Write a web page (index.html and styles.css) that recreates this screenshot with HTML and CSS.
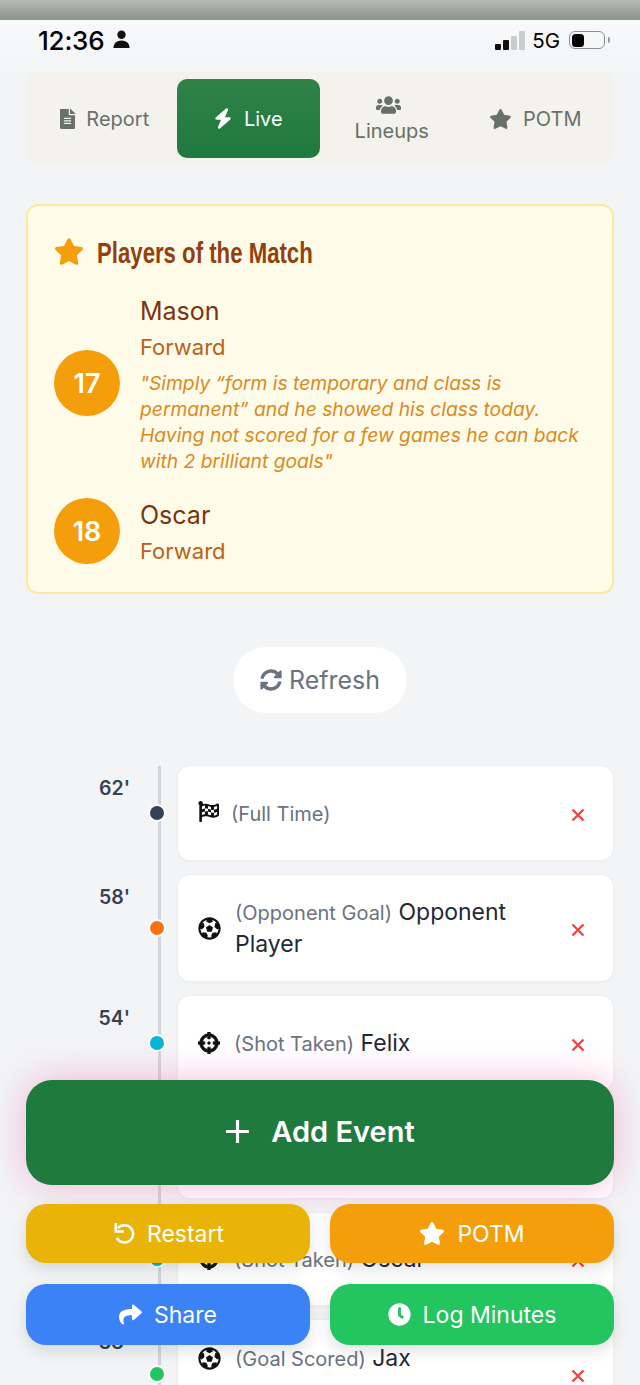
FILE: index.html
```html
<!DOCTYPE html>
<html lang="en">
<head>
<meta charset="utf-8">
<title>Match Live</title>
<link rel="stylesheet" href="styles.css">
</head>
<body>
<div class="page">
  <div class="topstrip"></div>
  <div class="statusbar">
    <div class="status-left">
      <span class="clock">12:36</span>
      <svg class="person" viewBox="0 0 20 20"><circle cx="10" cy="5" r="4.4"/><path d="M1.5 19c0-5 3.5-8 8.5-8s8.5 3 8.5 8z"/></svg>
    </div>
    <div class="status-right">
      <div class="signal"><i class="b1"></i><i class="b2"></i><i class="b3"></i><i class="b4"></i></div>
      <span class="net">5G</span>
      <div class="battery"><div class="battery-fill"></div></div>
      <div class="battery-cap"></div>
    </div>
  </div>

  <main class="main">
    <nav class="tabs">
      <div class="tab">
        <svg class="tab-ico doc" viewBox="0 0 384 512"><path d="M224 136V0H24C10.7 0 0 10.7 0 24v464c0 13.3 10.7 24 24 24h336c13.3 0 24-10.7 24-24V160H248c-13.2 0-24-10.8-24-24zm64 236c0 6.6-5.4 12-12 12H108c-6.6 0-12-5.4-12-12v-8c0-6.6 5.4-12 12-12h168c6.6 0 12 5.4 12 12v8zm0-64c0 6.6-5.4 12-12 12H108c-6.6 0-12-5.4-12-12v-8c0-6.6 5.4-12 12-12h168c6.6 0 12 5.4 12 12v8zm0-72v8c0 6.6-5.4 12-12 12H108c-6.6 0-12-5.4-12-12v-8c0-6.6 5.4-12 12-12h168c6.6 0 12 5.4 12 12zm96-114.1v6.1H256V0h6.1c6.4 0 12.5 2.5 17 7l97.9 98c4.5 4.5 7 10.6 7 16.9z"/></svg>
        <span>Report</span>
      </div>
      <div class="tab tab-active">
        <svg class="tab-ico bolt" viewBox="0 0 448 512"><path d="M349.4 44.6c5.9-13.7 1.5-29.7-10.6-38.5s-28.6-8-39.9 1.8l-256 224c-10 8.8-13.6 22.9-8.9 35.3S50.7 288 64 288H175.5L98.6 467.4c-5.9 13.7-1.5 29.7 10.6 38.5s28.6 8 39.9-1.8l256-224c10-8.8 13.6-22.9 8.9-35.3s-16.6-20.7-30-20.7H272.5L349.4 44.6z"/></svg>
        <span>Live</span>
      </div>
      <div class="tab tab-stack">
        <svg class="tab-ico users" viewBox="0 0 640 512"><path d="M96 224c35.3 0 64-28.7 64-64s-28.7-64-64-64-64 28.7-64 64 28.7 64 64 64zm448 0c35.3 0 64-28.7 64-64s-28.7-64-64-64-64 28.7-64 64 28.7 64 64 64zm32 32h-64c-17.6 0-33.5 7.1-45.1 18.6 40.3 22.1 68.9 62 75.1 109.4h66c17.7 0 32-14.3 32-32v-32c0-35.3-28.7-64-64-64zm-256 0c61.9 0 112-50.1 112-112S381.9 32 320 32 208 82.1 208 144s50.1 112 112 112zm76.8 32h-8.3c-20.8 10-43.9 16-68.5 16s-47.6-6-68.5-16h-8.3C179.6 288 128 339.6 128 403.2V432c0 26.5 21.5 48 48 48h288c26.5 0 48-21.5 48-48v-28.8c0-63.6-51.6-115.2-115.2-115.2zm-223.7-13.4C161.5 263.1 145.6 256 128 256H64c-35.3 0-64 28.7-64 64v32c0 17.7 14.3 32 32 32h65.9c6.3-47.4 34.9-87.3 75.2-109.4z"/></svg>
        <span>Lineups</span>
      </div>
      <div class="tab">
        <svg class="tab-ico star" viewBox="0 0 576 512"><path d="M259.3 17.8L194 150.2 47.9 171.5c-26.2 3.8-36.7 36.1-17.7 54.6l105.7 103-25 145.5c-4.5 26.3 23.2 46 46.4 33.7L288 439.6l130.7 68.7c23.2 12.2 50.9-7.4 46.4-33.7l-25-145.5 105.7-103c19-18.5 8.5-50.8-17.7-54.6L382 150.2 316.7 17.8c-11.7-23.6-45.6-23.9-57.4 0z"/></svg>
        <span>POTM</span>
      </div>
    </nav>

    <section class="potm-card">
      <h2 class="potm-title">
        <svg class="potm-star" viewBox="0 0 576 512"><path d="M259.3 17.8L194 150.2 47.9 171.5c-26.2 3.8-36.7 36.1-17.7 54.6l105.7 103-25 145.5c-4.5 26.3 23.2 46 46.4 33.7L288 439.6l130.7 68.7c23.2 12.2 50.9-7.4 46.4-33.7l-25-145.5 105.7-103c19-18.5 8.5-50.8-17.7-54.6L382 150.2 316.7 17.8c-11.7-23.6-45.6-23.9-57.4 0z"/></svg>
        <span class="potm-title-text">Players of the Match</span>
      </h2>
      <div class="potm-row">
        <div class="shirt shirt-first">17</div>
        <div class="potm-info">
          <div class="potm-name">Mason</div>
          <div class="potm-pos">Forward</div>
          <p class="potm-quote">"Simply “form is temporary and class is permanent” and he showed his class today. Having not scored for a few games he can back with 2 brilliant goals"</p>
        </div>
      </div>
      <div class="potm-row potm-row-second">
        <div class="shirt">18</div>
        <div class="potm-info">
          <div class="potm-name">Oscar</div>
          <div class="potm-pos">Forward</div>
        </div>
      </div>
    </section>

    <div class="refresh-wrap">
      <div class="refresh">
        <svg class="refresh-ico" viewBox="0 0 512 512"><path d="M370.72 133.28C339.458 104.008 298.888 87.962 255.848 88c-77.458.068-144.328 53.178-162.791 126.85-1.344 5.363-6.122 9.15-11.651 9.15H24.103c-7.498 0-13.194-6.807-11.807-14.176C33.933 94.924 134.813 8 256 8c66.448 0 126.791 26.136 171.315 68.685L463.03 40.97C478.149 25.851 504 36.559 504 57.941V192c0 13.255-10.745 24-24 24H345.941c-21.382 0-32.09-25.851-16.971-40.971l41.75-41.749zM32 296h134.059c21.382 0 32.09 25.851 16.971 40.971l-41.75 41.75c31.262 29.273 71.835 45.319 114.876 45.28 77.418-.07 144.315-53.144 162.787-126.849 1.344-5.363 6.122-9.15 11.651-9.15h57.304c7.498 0 13.194 6.807 11.807 14.176C478.067 417.076 377.187 504 256 504c-66.448 0-126.791-26.136-171.315-68.685L48.97 471.03C33.851 486.149 8 475.441 8 454.059V320c0-13.255 10.745-24 24-24z"/></svg>
        <span>Refresh</span>
      </div>
    </div>

    <section class="timeline">
      <div class="rail"></div>

      <article class="event">
        <div class="minute">62'</div>
        <span class="dot dot-dark"></span>
        <div class="event-card h94">
          <svg class="ev-ico flag" viewBox="0 0 512 512"><path d="M243.2 189.9V258c26.1 5.9 49.3 15.6 73.6 22.3v-68.2c-26-5.8-49.4-15.5-73.6-22.2zm223.3-123c-34.3 15.9-76.5 31.9-117 31.9C296 98.8 251.7 64 184.3 64c-25 0-47.3 4.4-68 12 2.8-7.3 4.1-15.2 3.6-23.6C118.1 24 94.8.8 66.4 0 34.3-.9 8 24.9 8 56.8c0 19.2 9.5 36.1 24 46.3V488c0 13.3 10.7 24 24 24h16c13.3 0 24-10.7 24-24v-94.4c28.3-12.1 63.6-22.1 114.4-22.1 53.6 0 97.8 34.8 165.2 34.8 48.2 0 86.7-16.3 122.5-40.9 8.7-6 13.8-15.8 13.8-26.4V95.9c.1-23.3-24.2-38.8-45.4-29zM169.6 325.5c-25.8 2.7-50 8.7-73.6 16.3v-70.5c26.2-9.1 46.7-14.2 73.6-17.2v71.4zM464 191c-23.6 9.8-46.3 19.5-73.6 23.9V286c24.8-3.4 51.4-11.8 73.6-26v70.5c-25.1 16.1-48.5 24.7-73.6 27.1V286c-27 3.7-47.9 1.5-73.6-5.6v67.4c-23.9-7.4-47.3-16.7-73.6-21.3V258c-19.7-4.4-40.8-6.8-73.6-3.8v-70c-22.4 3.1-44.6 10.2-73.6 20.9v-70.5c33.2-12.2 50.1-19.8 73.6-22v71.6c27-3.7 48.4-1.3 73.6 5.7v-67.4c23.7 7.4 47.2 16.7 73.6 21.3v68.4c23.7 5.3 47.6 6.9 73.6 2.7V143c27-4.8 52.3-13.6 73.6-22.5V191z"/></svg>
          <div class="ev-text"><span class="ev-type">(Full Time)</span></div>
          <svg class="ev-x" viewBox="0 0 14 14"><path d="M1.5 1.5l11 11M12.5 1.5l-11 11"/></svg>
        </div>
      </article>

      <article class="event">
        <div class="minute">58'</div>
        <span class="dot dot-orange"></span>
        <div class="event-card h106">
          <svg class="ev-ico" viewBox="0 0 512 512"><path d="M504 256c0 136.967-111.033 248-248 248S8 392.967 8 256 119.033 8 256 8s248 111.033 248 248zm-48 0l-.003-.282-26.064 22.741-62.679-58.5 16.454-84.355 34.303 3.072c-24.889-34.216-60.004-60.089-100.709-73.141l13.651 31.939L256 139l-74.953-41.525 13.651-31.939c-40.631 13.028-75.78 38.87-100.709 73.141l34.565-3.073 16.192 84.355-62.678 58.5-26.064-22.741-.003.282c0 43.015 13.497 83.952 38.472 117.991l7.704-33.897 85.138 10.447 36.301 77.826-29.902 17.786c40.202 13.122 84.29 13.148 124.572 0l-29.902-17.786 36.301-77.826 85.138-10.447 7.704 33.897C442.503 339.952 456 299.015 456 256zm-248.102 69.571l-29.894-91.312L256 177.732l77.996 56.527-29.622 91.312h-96.476z"/></svg>
          <div class="ev-text"><span class="ev-type">(Opponent Goal)</span> <span class="ev-name">Opponent</span> <span class="ev-name">Player</span></div>
          <svg class="ev-x" viewBox="0 0 14 14"><path d="M1.5 1.5l11 11M12.5 1.5l-11 11"/></svg>
        </div>
      </article>

      <article class="event">
        <div class="minute">54'</div>
        <span class="dot dot-cyan"></span>
        <div class="event-card h94">
          <svg class="ev-ico cross" viewBox="0 0 512 512"><path d="M500 224h-30.364C455.724 130.325 381.675 56.276 288 42.364V12c0-6.627-5.373-12-12-12h-40c-6.627 0-12 5.373-12 12v30.364C130.325 56.276 56.276 130.325 42.364 224H12c-6.627 0-12 5.373-12 12v40c0 6.627 5.373 12 12 12h30.364C56.276 381.675 130.325 455.724 224 469.636V500c0 6.627 5.373 12 12 12h40c6.627 0 12-5.373 12-12v-30.364C381.675 455.724 455.724 381.675 469.636 288H500c6.627 0 12-5.373 12-12v-40c0-6.627-5.373-12-12-12zM288 404.634V364c0-6.627-5.373-12-12-12h-40c-6.627 0-12 5.373-12 12v40.634C165.826 392.232 119.783 346.243 107.366 288H148c6.627 0 12-5.373 12-12v-40c0-6.627-5.373-12-12-12h-40.634C119.768 165.826 165.757 119.783 224 107.366V148c0 6.627 5.373 12 12 12h40c6.627 0 12-5.373 12-12v-40.634C346.174 119.768 392.217 165.757 404.634 224H364c-6.627 0-12 5.373-12 12v40c0 6.627 5.373 12 12 12h40.634C392.232 346.174 346.243 392.217 288 404.634zM288 256c0 17.673-14.327 32-32 32s-32-14.327-32-32c0-17.673 14.327-32 32-32s32 14.327 32 32z"/></svg>
          <div class="ev-text"><span class="ev-type">(Shot Taken)</span> <span class="ev-name">Felix</span></div>
          <svg class="ev-x" viewBox="0 0 14 14"><path d="M1.5 1.5l11 11M12.5 1.5l-11 11"/></svg>
        </div>
      </article>

      <article class="event">
        <div class="minute">50'</div>
        <span class="dot dot-cyan"></span>
        <div class="event-card h93"></div>
      </article>

      <article class="event">
        <div class="minute">45'</div>
        <span class="dot dot-cyan"></span>
        <div class="event-card h92">
          <svg class="ev-ico cross" viewBox="0 0 512 512"><path d="M500 224h-30.364C455.724 130.325 381.675 56.276 288 42.364V12c0-6.627-5.373-12-12-12h-40c-6.627 0-12 5.373-12 12v30.364C130.325 56.276 56.276 130.325 42.364 224H12c-6.627 0-12 5.373-12 12v40c0 6.627 5.373 12 12 12h30.364C56.276 381.675 130.325 455.724 224 469.636V500c0 6.627 5.373 12 12 12h40c6.627 0 12-5.373 12-12v-30.364C381.675 455.724 455.724 381.675 469.636 288H500c6.627 0 12-5.373 12-12v-40c0-6.627-5.373-12-12-12zM288 404.634V364c0-6.627-5.373-12-12-12h-40c-6.627 0-12 5.373-12 12v40.634C165.826 392.232 119.783 346.243 107.366 288H148c6.627 0 12-5.373 12-12v-40c0-6.627-5.373-12-12-12h-40.634C119.768 165.826 165.757 119.783 224 107.366V148c0 6.627 5.373 12 12 12h40c6.627 0 12-5.373 12-12v-40.634C346.174 119.768 392.217 165.757 404.634 224H364c-6.627 0-12 5.373-12 12v40c0 6.627 5.373 12 12 12h40.634C392.232 346.174 346.243 392.217 288 404.634zM288 256c0 17.673-14.327 32-32 32s-32-14.327-32-32c0-17.673 14.327-32 32-32s32 14.327 32 32z"/></svg>
          <div class="ev-text"><span class="ev-type">(Shot Taken)</span> <span class="ev-name">Oscar</span></div>
          <svg class="ev-x" viewBox="0 0 14 14"><path d="M1.5 1.5l11 11M12.5 1.5l-11 11"/></svg>
        </div>
      </article>

      <article class="event">
        <div class="minute">38'</div>
        <span class="dot dot-green"></span>
        <div class="event-card h108">
          <div class="ev-top">
            <svg class="ev-ico" viewBox="0 0 512 512"><path d="M504 256c0 136.967-111.033 248-248 248S8 392.967 8 256 119.033 8 256 8s248 111.033 248 248zm-48 0l-.003-.282-26.064 22.741-62.679-58.5 16.454-84.355 34.303 3.072c-24.889-34.216-60.004-60.089-100.709-73.141l13.651 31.939L256 139l-74.953-41.525 13.651-31.939c-40.631 13.028-75.78 38.87-100.709 73.141l34.565-3.073 16.192 84.355-62.678 58.5-26.064-22.741-.003.282c0 43.015 13.497 83.952 38.472 117.991l7.704-33.897 85.138 10.447 36.301 77.826-29.902 17.786c40.202 13.122 84.29 13.148 124.572 0l-29.902-17.786 36.301-77.826 85.138-10.447 7.704 33.897C442.503 339.952 456 299.015 456 256zm-248.102 69.571l-29.894-91.312L256 177.732l77.996 56.527-29.622 91.312h-96.476z"/></svg>
            <div class="ev-text"><span class="ev-type">(Goal Scored)</span> <span class="ev-name">Jax</span></div>
          </div>
          <svg class="ev-x" viewBox="0 0 14 14"><path d="M1.5 1.5l11 11M12.5 1.5l-11 11"/></svg>
        </div>
      </article>
    </section>
  </main>

  <div class="actions">
    <div class="btn-add">
      <svg class="add-ico" viewBox="0 0 24 24"><path d="M12 1v22M1 12h22"/></svg>
      <span>Add Event</span>
    </div>
    <div class="btn-grid">
      <div class="btn btn-restart">
        <svg class="btn-ico" viewBox="0 0 24 24"><path class="thick" d="M6.2 6.5A9 9 0 1 1 5 16.5"/><path d="M2.6 2.6h2.7v7.6h7.2v2.6H2.6z" transform="translate(0 -1.5)"/></svg>
        <span>Restart</span>
      </div>
      <div class="btn btn-potm">
        <svg class="btn-ico btn-ico-wide" viewBox="0 0 576 512"><path d="M259.3 17.8L194 150.2 47.9 171.5c-26.2 3.8-36.7 36.1-17.7 54.6l105.7 103-25 145.5c-4.5 26.3 23.2 46 46.4 33.7L288 439.6l130.7 68.7c23.2 12.2 50.9-7.4 46.4-33.7l-25-145.5 105.7-103c19-18.5 8.5-50.8-17.7-54.6L382 150.2 316.7 17.8c-11.7-23.6-45.6-23.9-57.4 0z"/></svg>
        <span>POTM</span>
      </div>
      <div class="btn btn-share">
        <svg class="btn-ico" viewBox="0 0 512 512"><path d="M503.691 189.836L327.687 37.851C312.281 24.546 288 35.347 288 56.015v80.053C127.371 137.907 0 170.1 0 322.326c0 61.441 39.581 122.309 83.333 154.132 13.653 9.931 33.111-2.533 28.077-18.631C66.066 312.814 132.917 274.316 288 272.085V360c0 20.7 24.3 31.453 39.687 18.164l176.004-152c11.071-9.562 11.086-26.753 0-36.328z"/></svg>
        <span>Share</span>
      </div>
      <div class="btn btn-log">
        <svg class="btn-ico" viewBox="0 0 512 512"><path d="M256,8C119,8,8,119,8,256S119,504,256,504,504,393,504,256,393,8,256,8Zm92.49,313h0l-20,25a16,16,0,0,1-22.49,2.5h0l-67-49.72a40,40,0,0,1-15-31.23V112a16,16,0,0,1,16-16h32a16,16,0,0,1,16,16V256l58,42.5A16,16,0,0,1,348.49,321Z"/></svg>
        <span>Log Minutes</span>
      </div>
    </div>
  </div>
</div>
</body>
</html>
```
FILE: styles.css
```css
* { box-sizing: border-box; }
html, body { margin: 0; padding: 0; }
body { font-family: Inter, "Noto Sans", sans-serif; background: #f3f4f6; }
.page { position: relative; width: 640px; height: 1385px; overflow: hidden; background: #f3f4f6; }

.topstrip { height: 20px; background: linear-gradient(#b4bbb2, #8a9389); }
.statusbar {
  height: 52px; padding: 0 30px 12px 38px; display: flex; align-items: center; justify-content: space-between;
  background: linear-gradient(#f8f9fa, #f3f4f6); color: #000;
}
.status-left { display: flex; align-items: center; gap: 8px; }
.clock { font-size: 26px; font-weight: 500; letter-spacing: -0.2px; }
.person { width: 19px; height: 19px; fill: #111; margin-top: -2px; }
.status-right { display: flex; align-items: center; }
.signal { display: flex; align-items: flex-end; gap: 2px; height: 19px; margin-right: 7px; }
.signal i { display: block; width: 6px; border-radius: 1px; }
.signal .b1 { height: 6px; background: #111; }
.signal .b2 { height: 10px; background: #111; }
.signal .b3 { height: 14px; background: #c9cbcc; }
.signal .b4 { height: 19px; background: #c9cbcc; }
.net { font-size: 20.5px; font-weight: 400; margin-right: 9px; }
.battery { width: 36px; height: 18px; border: 1.5px solid #8e8e90; border-radius: 6px; padding: 1.5px; }
.battery-fill { width: 12px; height: 100%; background: #000; border-radius: 3.5px; }
.battery-cap { width: 2px; height: 6px; margin-left: 3px; background: #9a9a9c; border-radius: 0 2px 2px 0; }

.main { padding: 0 26px; }

.tabs {
  display: grid; grid-template-columns: repeat(4, 1fr); height: 91px; padding: 7px 7px 5px;
  background: #f3f2ec; border-radius: 12px;
}
.tab {
  display: flex; align-items: center; justify-content: center; gap: 11px; color: #687069;
  font-size: 20px; font-weight: 400; border-radius: 10px;
}
.tab-ico { fill: currentColor; flex: none; }
.tab-active { background: linear-gradient(#2f8148, #1f7a3d); color: #fff; gap: 12px; }
.tab-stack { flex-direction: column; gap: 4px; }
.doc { width: 15px; height: 20px; }
.bolt { width: 18px; height: 21px; }
.users { width: 25px; height: 20px; margin-right: 6px; }
.star { width: 23px; height: 20px; }

.potm-card {
  margin-top: 41px; height: 390px; padding: 32px 26px 0 26px;
  background: #fffbe9; border: 2px solid #fbe9a0; border-radius: 12px;
}
.potm-title { display: flex; align-items: center; gap: 13px; margin: 0; height: 30px; }
.potm-star { width: 30px; height: 27px; fill: #f59e0b; margin-top: -4px; flex: none; }
.potm-title-text {
  font-family: "Liberation Sans", sans-serif; font-size: 29px; font-weight: 700; color: #92400e;
  transform: scaleX(.765); transform-origin: left center; white-space: nowrap;
}
.potm-row { display: flex; align-items: center; gap: 20px; margin-top: 26px; }
.potm-row-second { margin-top: 24px; align-items: flex-start; }
.shirt {
  flex: none; width: 66px; height: 66px; border-radius: 50%; background: #f59e0b; color: #fff;
  display: flex; align-items: center; justify-content: center; font-size: 27px; font-weight: 600;
}
.shirt-first { margin-top: -2px; }
.potm-info { flex: 1; min-width: 0; }
.potm-name { font-size: 25px; line-height: 35px; color: #78350f; font-weight: 400; }
.potm-pos { font-size: 22px; line-height: 36px; color: #b8621b; }
.potm-quote { margin: 5px 0 0; font-size: 19.25px; line-height: 26px; font-style: italic; color: #d98a1e; }

.refresh-wrap { display: flex; justify-content: center; margin-top: 53px; }
.refresh {
  width: 174px; height: 66px; border-radius: 33px; background: #fff; color: #6b7280;
  display: flex; align-items: center; justify-content: center; gap: 7px; font-size: 25px;
}
.refresh-ico { width: 22px; height: 22px; fill: currentColor; }

.timeline { position: relative; margin-top: 53px; display: flex; flex-direction: column; gap: 15px; }
.rail { position: absolute; left: 132px; top: 0; bottom: -300px; width: 3px; background: #d1d5db; }
.event { position: relative; display: flex; align-items: flex-start; }
.minute {
  flex: none; width: 104px; margin-top: 11px; text-align: right;
  font-size: 19.5px; line-height: 23px; font-weight: 600; color: #374151;
}
.dot {
  position: absolute; left: 122px; top: 50%; width: 18px; height: 18px; margin-top: -9px;
  border-radius: 50%; border: 2.5px solid #fff;
}
.dot-dark { background: #334155; }
.dot-orange { background: #f97316; }
.dot-cyan { background: #06b6d4; }
.dot-green { background: #22c55e; }
.event-card {
  margin: 0 1px 0 48px; flex: 1; display: flex; align-items: center; padding: 0 28px 0 20px; gap: 14px;
  background: #fff; border-radius: 12px; box-shadow: 0 0 0 1px #eceef1, 0 1px 3px rgba(0,0,0,.06);
}
.h94 { height: 94px; }
.h106 { height: 106px; }
.h93 { height: 93px; }
.h92 { height: 92px; }
.h108 { height: 108px; }
.ev-ico { flex: none; width: 23px; height: 23px; fill: #111; }
.cross { stroke: #111; stroke-width: 16; width: 22px; height: 22px; }
.flag { width: 21px; height: 23px; margin: -3px -2px 0 0; }
.ev-text { flex: 1; min-width: 0; font-size: 23px; line-height: 32px; }
.ev-type { font-size: 20px; line-height: 1; color: #6b7280; }
.ev-name { font-size: 23px; color: #1f2937; }
.ev-x { flex: none; width: 14px; height: 14px; margin: 4px 0 0 20px; fill: none; stroke: #ef4444; stroke-width: 2.4; }
.ev-top { flex: 1; min-width: 0; align-self: flex-start; padding-top: 22px; display: flex; align-items: center; gap: 14px; }

.actions { position: absolute; left: 26px; top: 1080px; width: 588px; display: flex; flex-direction: column; gap: 19px; }
.btn-add {
  height: 105px; border-radius: 26px; background: #1f7a3d; color: #fff; padding-bottom: 2px;
  display: flex; align-items: center; justify-content: center; gap: 21px;
  font-size: 29px; font-weight: 600; box-shadow: 0 0 36px rgba(236,72,153,.36);
}
.add-ico { width: 25px; height: 25px; fill: none; stroke: #fff; stroke-width: 3; }
.btn-grid { display: grid; grid-template-columns: 1fr 1fr; column-gap: 20px; row-gap: 21px; grid-template-rows: 59px 61px; }
.btn {
  border-radius: 20px; color: #fff; display: flex; align-items: center; justify-content: center; gap: 12px;
  font-size: 23px; font-weight: 400; box-shadow: 0 6px 16px rgba(0,0,0,.12);
}
.btn-ico { width: 23px; height: 23px; fill: #fff; flex: none; }
.btn-ico .thick { fill: none; stroke: #fff; stroke-width: 2.6; }
.btn-ico-wide { width: 26px; }
.btn-restart { background: #e9b308; }
.btn-potm { background: #f59e0b; }
.btn-share { background: #3b82f6; }
.btn-log { background: #22c55e; }
```
